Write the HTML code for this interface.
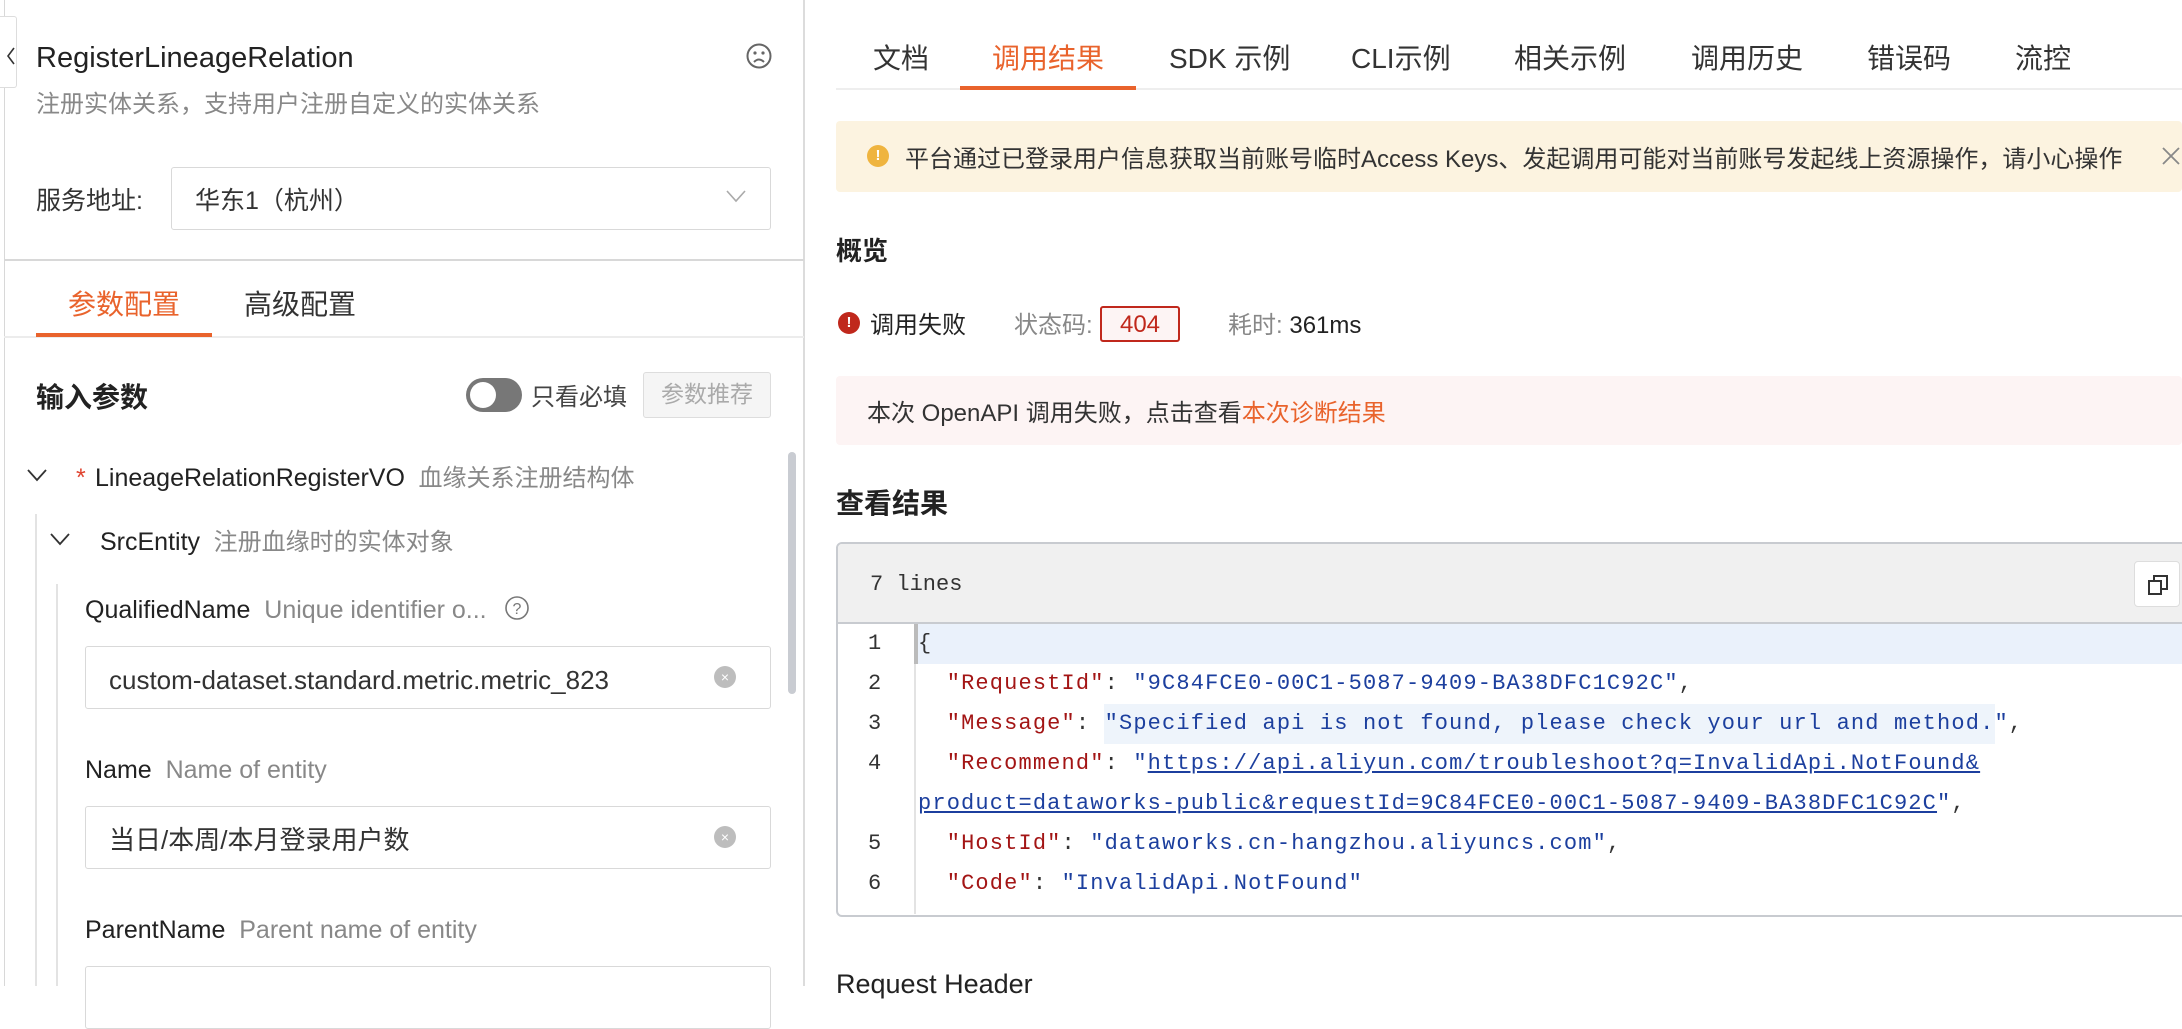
<!DOCTYPE html>
<html><head><meta charset="utf-8"><style>
*{margin:0;padding:0;box-sizing:border-box}
body{width:2182px;height:986px;overflow:hidden;background:#fff;font-family:"Liberation Sans","Noto Sans CJK SC",sans-serif;color:#333;position:relative}
.a{position:absolute;white-space:nowrap}
.t{position:absolute;white-space:nowrap;line-height:1;margin-top:3px}
.mono{font-family:"Liberation Mono","DejaVu Sans Mono",monospace}
.inp{position:absolute;border:1.5px solid #d9d9d9;border-radius:3px;background:#fff}
.clr{position:absolute;width:22px;height:22px;border-radius:50%;background:#bdbdbd;color:#fff;font-size:14px;text-align:center;line-height:22px}
.code{font-size:22px;letter-spacing:1.15px;line-height:40px}
.k{color:#a31515}.s{color:#1c3f9e}
</style></head><body>
<!-- left panel -->
<div class="a" style="left:4px;top:0;width:1px;height:986px;background:#d8d8d8"></div>
<div class="a" style="left:803px;top:0;width:2px;height:986px;background:#dcdcdc"></div>
<div class="a" style="left:0;top:16px;width:17px;height:72px;border:1.5px solid #ddd;border-left:none;border-radius:0 3px 3px 0;background:#fff"></div>
<svg class="a" style="left:6px;top:46px" width="10" height="20"><path d="M8 2 L2 10 L8 18" stroke="#333" stroke-width="1.6" fill="none"/></svg>
<div class="t" style="left:36px;top:41px;font-size:29px;color:#222">RegisterLineageRelation</div>
<svg class="a" style="left:745px;top:42px" width="28" height="28" viewBox="0 0 28 28"><circle cx="14" cy="14" r="11.5" stroke="#666" stroke-width="2" fill="none"/><circle cx="10" cy="11" r="1.6" fill="#666"/><circle cx="18" cy="11" r="1.6" fill="#666"/><path d="M9 20 Q14 15 19 20" stroke="#666" stroke-width="2" fill="none"/></svg>
<div class="t" style="left:36px;top:90px;font-size:24px;color:#888">注册实体关系，支持用户注册自定义的实体关系</div>
<div class="t" style="left:36px;top:186px;font-size:25px;color:#333">服务地址:</div>
<div class="inp" style="left:171px;top:167px;width:600px;height:63px"></div>
<div class="t" style="left:195px;top:186px;font-size:25px;color:#333">华东1（杭州）</div>
<svg class="a" style="left:725px;top:188px" width="22" height="16"><path d="M2 3 L11 13 L20 3" stroke="#aaa" stroke-width="1.6" fill="none"/></svg>
<div class="a" style="left:4px;top:259px;width:800px;height:2px;background:#d8d8d8"></div>
<div class="t" style="left:68px;top:288px;font-size:28px;color:#e9632c">参数配置</div>
<div class="t" style="left:244px;top:288px;font-size:28px;color:#333">高级配置</div>
<div class="a" style="left:4px;top:336px;width:800px;height:1.5px;background:#ececec"></div>
<div class="a" style="left:36px;top:333px;width:176px;height:4px;background:#e9632c"></div>
<div class="t" style="left:36px;top:381px;font-size:28px;color:#222;font-weight:bold">输入参数</div>
<div class="a" style="left:466px;top:378px;width:56px;height:34px;border-radius:17px;background:#777"></div>
<div class="a" style="left:470px;top:382px;width:26px;height:26px;border-radius:50%;background:#fff"></div>
<div class="t" style="left:531px;top:383px;font-size:24px;color:#444">只看必填</div>
<div class="a" style="left:643px;top:372px;width:128px;height:46px;border:1.5px solid #ddd;border-radius:3px;background:#f5f5f5;color:#aaa;font-size:23px;text-align:center;line-height:43px">参数推荐</div>
<div class="a" style="left:788px;top:452px;width:8px;height:242px;border-radius:4px;background:#c9ccd2"></div>
<svg class="a" style="left:26px;top:467px" width="22" height="16"><path d="M2 3 L11 13 L20 3" stroke="#333" stroke-width="1.8" fill="none"/></svg>
<div class="t" style="left:76px;top:463px;font-size:25px;color:#e0432f">*</div>
<div class="t" style="left:95px;top:463px;font-size:25px;color:#222">LineageRelationRegisterVO <span style="color:#888;font-size:24px">&nbsp;血缘关系注册结构体</span></div>
<div class="a" style="left:35px;top:514px;width:1.5px;height:472px;background:#e3e3e3"></div>
<svg class="a" style="left:49px;top:531px" width="22" height="16"><path d="M2 3 L11 13 L20 3" stroke="#333" stroke-width="1.8" fill="none"/></svg>
<div class="t" style="left:100px;top:527px;font-size:25px;color:#222">SrcEntity <span style="color:#888;font-size:24px">&nbsp;注册血缘时的实体对象</span></div>
<div class="a" style="left:56px;top:584px;width:1.5px;height:402px;background:#e3e3e3"></div>
<div class="t" style="left:85px;top:595px;font-size:25px;color:#222">QualifiedName <span style="color:#888">&nbsp;Unique identifier o...</span></div>
<svg class="a" style="left:503px;top:594px" width="28" height="28"><circle cx="14" cy="14" r="11" stroke="#777" stroke-width="1.6" fill="none"/><text x="14" y="20" text-anchor="middle" font-size="16" fill="#777" font-family="Liberation Sans">?</text></svg>
<div class="inp" style="left:85px;top:646px;width:686px;height:63px"></div>
<div class="t" style="left:109px;top:664px;font-size:26px;color:#333">custom-dataset.standard.metric.metric_823</div>
<div class="clr" style="left:714px;top:666px">×</div>
<div class="t" style="left:85px;top:755px;font-size:25px;color:#222">Name <span style="color:#888">&nbsp;Name of entity</span></div>
<div class="inp" style="left:85px;top:806px;width:686px;height:63px"></div>
<div class="t" style="left:109px;top:824px;font-size:26px;color:#333">当日/本周/本月登录用户数</div>
<div class="clr" style="left:714px;top:826px">×</div>
<div class="t" style="left:85px;top:915px;font-size:25px;color:#222">ParentName <span style="color:#888">&nbsp;Parent name of entity</span></div>
<div class="inp" style="left:85px;top:966px;width:686px;height:63px"></div>

<!-- right panel -->
<div class="a" style="left:836px;top:88px;width:1346px;height:2px;background:#eee"></div>
<div class="a" style="left:960px;top:86px;width:176px;height:4px;background:#e9632c"></div>
<div class="t" style="top:42px;left:873px;font-size:28px;color:#333">文档</div>
<div class="t" style="top:42px;left:992px;font-size:28px;color:#e9632c">调用结果</div>
<div class="t" style="top:42px;left:1169px;font-size:28px;color:#333">SDK 示例</div>
<div class="t" style="top:42px;left:1351px;font-size:28px;color:#333">CLI示例</div>
<div class="t" style="top:42px;left:1514px;font-size:28px;color:#333">相关示例</div>
<div class="t" style="top:42px;left:1691px;font-size:28px;color:#333">调用历史</div>
<div class="t" style="top:42px;left:1867px;font-size:28px;color:#333">错误码</div>
<div class="t" style="top:42px;left:2015px;font-size:28px;color:#333">流控</div>

<div class="a" style="left:836px;top:121px;width:1346px;height:71px;background:#fcf3e0;border-radius:4px"></div>
<div class="a" style="left:867px;top:145px;width:22px;height:22px;border-radius:50%;background:#efb43f;color:#fff;font-size:15px;font-weight:bold;text-align:center;line-height:22px">!</div>
<div class="t" style="left:905px;top:145px;font-size:24px;color:#333">平台通过已登录用户信息获取当前账号临时Access Keys、发起调用可能对当前账号发起线上资源操作，请小心操作</div>
<svg class="a" style="left:2160px;top:145px" width="22" height="22"><path d="M3 3 L19 19 M19 3 L3 19" stroke="#888" stroke-width="1.8"/></svg>

<div class="t" style="left:836px;top:235px;font-size:26px;color:#222;font-weight:bold">概览</div>
<div class="a" style="left:838px;top:312px;width:22px;height:22px;border-radius:50%;background:#c0281c;color:#fff;font-size:15px;font-weight:bold;text-align:center;line-height:22px">!</div>
<div class="t" style="left:870px;top:311px;font-size:24px;color:#222">调用失败</div>
<div class="t" style="left:1014px;top:311px;font-size:24px;color:#888">状态码:</div>
<div class="a" style="left:1100px;top:306px;width:80px;height:36px;border:2px solid #c0281c;border-radius:3px;background:#fdf4f4;color:#c0281c;font-size:24px;text-align:center;line-height:33px">404</div>
<div class="t" style="left:1228px;top:311px;font-size:24px;color:#888">耗时: <span style="color:#222">361ms</span></div>

<div class="a" style="left:836px;top:376px;width:1346px;height:69px;background:#fdf4f4;border-radius:4px"></div>
<div class="t" style="left:867px;top:399px;font-size:24px;color:#333">本次 OpenAPI 调用失败，点击查看<span style="color:#e9632c">本次诊断结果</span></div>

<div class="t" style="left:836px;top:487px;font-size:28px;color:#222;font-weight:bold">查看结果</div>

<div class="a" style="left:836px;top:542px;width:1360px;height:375px;border:2px solid #c8cbd0;border-radius:6px;overflow:hidden">
  <div class="a" style="left:0;top:0;width:1360px;height:80px;background:#f0f0f0;border-bottom:2px solid #c8cbd0"></div>
  <div class="a mono" style="left:32px;top:28px;font-size:22px;color:#333">7 lines</div>
  <div class="a" style="left:1296px;top:17px;width:46px;height:46px;background:#fff;border:1.5px solid #ddd;border-radius:4px"></div>
  <svg class="a" style="left:1309px;top:30px" width="22" height="22"><rect x="2" y="7" width="12" height="13" stroke="#333" stroke-width="2" fill="none"/><path d="M7 7 V2 H20 V15 H14" stroke="#333" stroke-width="2" fill="none"/></svg>
  <div class="a" style="left:78px;top:80px;width:1290px;height:40px;background:#eaf1fb"></div>
  <div class="a" style="left:76px;top:80px;width:2px;height:290px;background:#e3e3e3"></div>
  <div class="a" style="left:76px;top:80px;width:4px;height:40px;background:#bbb"></div>
  <div class="a" style="left:266px;top:160px;width:891px;height:40px;background:#eef4fb"></div>
  <div class="a mono code" style="left:30px;top:80px;color:#333;letter-spacing:0">1<br>2<br>3<br>4<br><br>5<br>6</div>
  <div class="a mono code" style="left:80px;top:80px;color:#333">{<br>
  &nbsp;&nbsp;<span class="k">"RequestId"</span>: <span class="s">"9C84FCE0-00C1-5087-9409-BA38DFC1C92C"</span>,<br>
  &nbsp;&nbsp;<span class="k">"Message"</span>: <span class="s">"Specified api is not found, please check your url and method."</span>,<br>
  &nbsp;&nbsp;<span class="k">"Recommend"</span>: <span class="s">"<u>https://api.aliyun.com/troubleshoot?q=InvalidApi.NotFound&amp;</u></span><br>
  <span class="s"><u>product=dataworks-public&amp;requestId=9C84FCE0-00C1-5087-9409-BA38DFC1C92C</u>"</span>,<br>
  &nbsp;&nbsp;<span class="k">"HostId"</span>: <span class="s">"dataworks.cn-hangzhou.aliyuncs.com"</span>,<br>
  &nbsp;&nbsp;<span class="k">"Code"</span>: <span class="s">"InvalidApi.NotFound"</span></div>
</div>
<div class="t" style="left:836px;top:968px;font-size:27px;color:#222">Request Header</div>
</body></html>
